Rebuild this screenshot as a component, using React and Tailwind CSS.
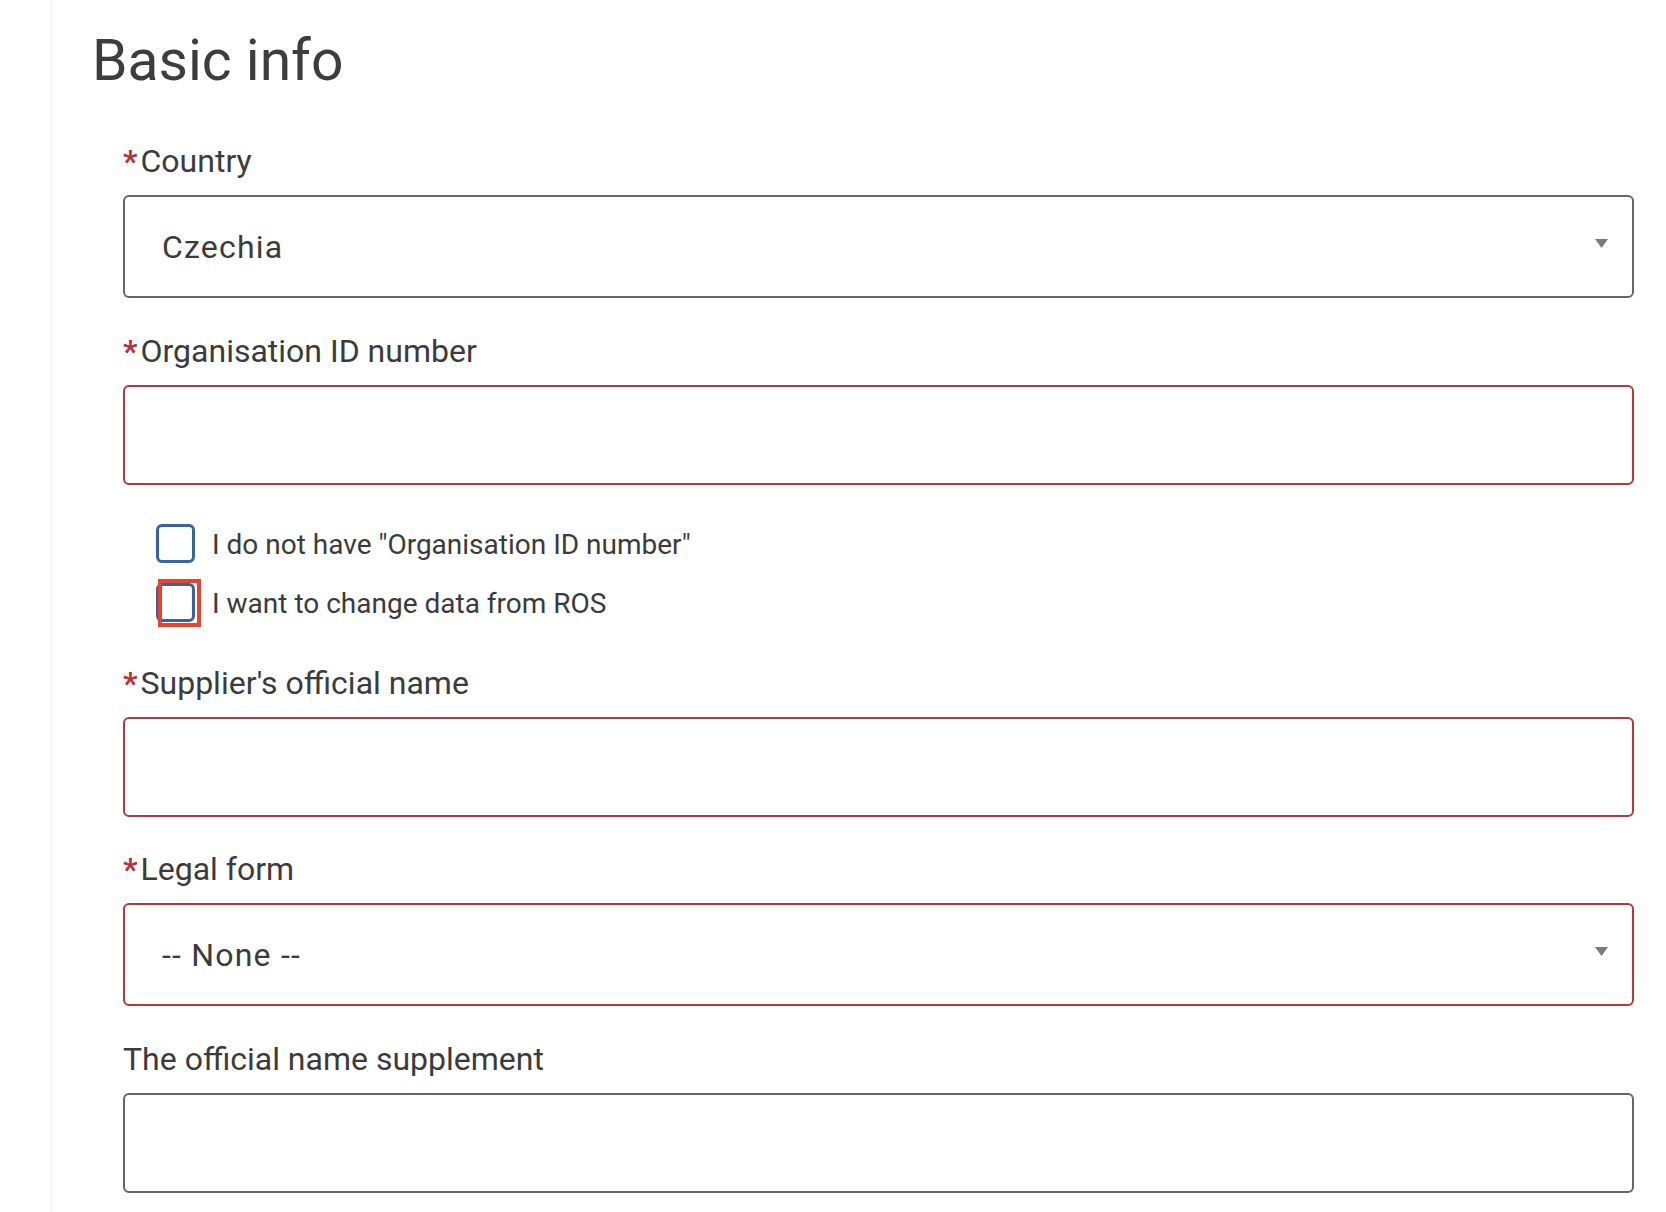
const font = { fontFamily: 'Roboto, "Liberation Sans", sans-serif' };

const Label = ({ children, required, className = '' }) => (
  <div className={`h-[40px] text-[32px] leading-[40px] text-[#3b3b3b] whitespace-nowrap ${className}`}>
    {required && <span className="mr-[3px] text-[#bb2f35] font-bold">*</span>}
    {children}
  </div>
);

const Arrow = () => (
  <svg width="13" height="9" viewBox="0 0 13 9" className="mb-[6px] shrink-0">
    <path d="M0 0h13L6.5 9z" fill="#7a7a7a" />
  </svg>
);

const SelectBox = ({ value, invalid }) => (
  <div
    className={`mt-[14px] h-[103px] flex items-center justify-between rounded-[6px] border-2 pl-[37px] pr-[24px] bg-white ${
      invalid ? 'border-[#b9363c]' : 'border-[#666666]'
    }`}
  >
    <span className="text-[32px] tracking-[1.2px] text-[#3b3b3b]">{value}</span>
    <Arrow />
  </div>
);

const TextBox = ({ invalid }) => (
  <div
    className={`mt-[14px] h-[100px] rounded-[6px] border-2 bg-white ${
      invalid ? 'border-[#b9363c]' : 'border-[#666666]'
    }`}
  />
);

const Checkbox = ({ label, highlighted }) => (
  <div className="h-[40px] flex items-center">
    <div className="relative w-[39px] h-[39px] shrink-0">
      <div className="w-full h-full rounded-[6px] border-[3px] border-[#3563a6] bg-white" />
      {highlighted && (
        <div className="absolute left-[2px] top-[-4px] w-[43px] h-[48px] border-[4px] border-[#e8432f]" />
      )}
    </div>
    <span className="ml-[17px] pt-[4px] text-[28px] leading-[40px] text-[#3b3b3b] whitespace-nowrap">{label}</span>
  </div>
);

export default function App() {
  return (
    <div className="min-h-screen w-full bg-white flex" style={font}>
      <div className="w-[51px] shrink-0" />
      <div className="flex-1 border-l border-[#f1f1f1] pl-[40px] pr-[32px] pb-[20px]">
        <h1 className="pt-[33px] text-[57px] leading-[56px] font-normal text-[#3d3d3d]">Basic info</h1>

        <div className="pl-[31px] flex flex-col">
          <Label required className="mt-[52px]">Country</Label>
          <SelectBox value="Czechia" />

          <Label required className="mt-[33px]">Organisation ID number</Label>
          <TextBox invalid />

          <div className="mt-[38px] ml-[33px] flex flex-col gap-[19px]">
            <Checkbox label={'I do not have "Organisation ID number"'} />
            <Checkbox label="I want to change data from ROS" highlighted />
          </div>

          <Label required className="mt-[41px]">Supplier's official name</Label>
          <TextBox invalid />

          <Label required className="mt-[32px]">Legal form</Label>
          <SelectBox value="-- None --" invalid />

          <Label className="mt-[33px]">The official name supplement</Label>
          <TextBox />
        </div>
      </div>
    </div>
  );
}
